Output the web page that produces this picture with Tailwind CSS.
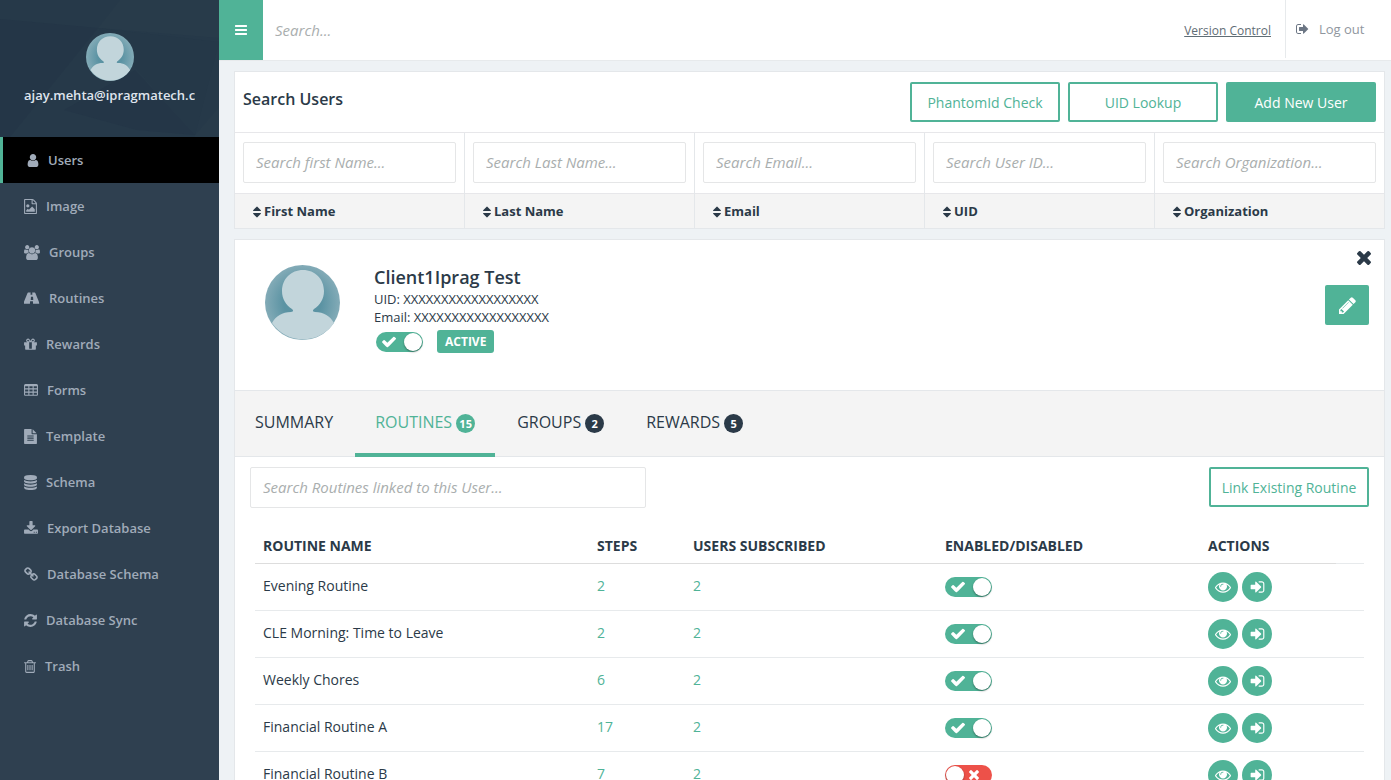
<!DOCTYPE html>
<html lang="en">
<head>
    <meta charset="utf-8">
    <meta name="viewport" content="width=device-width, initial-scale=1">
    <title>Users</title>
    <script src="https://cdn.jsdelivr.net/npm/@tailwindcss/browser@4"></script>
</head>
<body class="flex min-h-screen bg-[#eef2f5] font-['Open_Sans',sans-serif] text-[#2b3a48]">

    <!-- Icon sprite -->
    <svg class="absolute size-0" xmlns="http://www.w3.org/2000/svg">
        <symbol id="bars" viewBox="128 128 1536 1536"><path d="M1664 1344v128q0 26-19 45t-45 19h-1408q-26 0-45-19t-19-45v-128q0-26 19-45t45-19h1408q26 0 45 19t19 45zm0-512v128q0 26-19 45t-45 19h-1408q-26 0-45-19t-19-45v-128q0-26 19-45t45-19h1408q26 0 45 19t19 45zm0-512v128q0 26-19 45t-45 19h-1408q-26 0-45-19t-19-45v-128q0-26 19-45t45-19h1408q26 0 45 19t19 45z"/></symbol>
        <symbol id="user" viewBox="192 0 1408 1792"><path d="M1536 1399q0 109-62.5 187t-150.5 78h-854q-88 0-150.5-78t-62.5-187q0-85 8.500-160.500t31.500-152 58.500-131 94-89 134.500-34.500q131 128 313 128t313-128q76 0 134.500 34.500t94 89 58.500 131 31.500 152 8.500 160.500zm-256-887q0 159-112.500 271.500t-271.500 112.500-271.500-112.500-112.500-271.500 112.500-271.500 271.500-112.500 271.500 112.500 112.500 271.500z"/></symbol>
        <symbol id="image" viewBox="128 0 1536 1792"><path d="M1596 380q28 28 48 76t20 88v1152q0 40-28 68t-68 28h-1344q-40 0-68-28t-28-68v-1600q0-40 28-68t68-28h896q40 0 88 20t76 48zm-444-244v376h376q-10-29-22-41l-313-313q-12-12-41-22zm384 1528v-1024h-416q-40 0-68-28t-28-68v-416h-768v1536h1280zm-128-448v320h-1024v-192l192-192 128 128 384-384zm-832-192q-80 0-136-56t-56-136 56-136 136-56 136 56 56 136-56 136-136 56z"/></symbol>
        <symbol id="users" viewBox="0 0 1920 1792"><path d="M593 896q-162 5-265 128h-134q-82 0-138-40.500t-56-118.500q0-353 124-353 6 0 43.500 21t97.500 42.500 119 21.500q67 0 133-23-5 37-5 66 0 139 81 256zm1071 637q0 120-73 189.500t-194 69.500h-874q-121 0-194-69.500t-73-189.500q0-53 3.500-103.500t14-109 26.500-108.500 43-97.500 62-81 85.500-53.500 111.500-20q10 0 43 21.500t73 48 107 48 135 21.500 135-21.500 107-48 73-48 43-21.500q61 0 111.500 20t85.500 53.500 62 81 43 97.500 26.500 108.500 14 109 3.500 103.500zm-1024-1277q0 106-75 181t-181 75-181-75-75-181 75-181 181-75 181 75 75 181zm704 384q0 159-112.500 271.500t-271.500 112.500-271.500-112.500-112.500-271.500 112.500-271.500 271.500-112.500 271.500 112.500 112.500 271.500zm576 225q0 78-56 118.500t-138 40.500h-134q-103-123-265-128 81-117 81-256 0-29-5-66 66 23 133 23 59 0 119-21.500t97.500-42.500 43.500-21q124 0 124 353zm-128-609q0 106-75 181t-181 75-181-75-75-181 75-181 181-75 181 75 75 181z"/></symbol>
        <symbol id="road" viewBox="0 0 1920 1792"><path d="M1111 1045v-4l-24-320q-1-13-11-22.500t-23-9.500h-186q-13 0-23 9.500t-11 22.500l-24 320v4q-1 12 8 20t21 8h244q12 0 21-8t8-20zm718 388q0 103-65 103h-704q13 0 22-9.500t8-22.500l-20-256q-1-13-11-22.500t-23-9.500h-272q-13 0-23 9.500t-11 22.500l-20 256q-1 13 8 22.500t22 9.500h-704q-65 0-65-103 0-76 37-163l417-1044q8-19 26-33t38-14h339q-13 0-23 9.500t-11 22.500l-15 192q-1 14 8 23t22 9h166q13 0 22-9t8-23l-15-192q-1-13-11-22.500t-23-9.500h339q20 0 38 14t26 33l417 1044q37 87 37 163z"/></symbol>
        <symbol id="gift" viewBox="128 0 1536 1792"><path d="M1056 1356v-716h-320v716q0 25 18 38.500t46 13.500h192q28 0 46-13.500t18-38.500zm-456-844h195l-126-161q-26-31-69-31-40 0-68 28t-28 68 28 68 68 28zm688-96q0-40-28-68t-68-28q-43 0-69 31l-125 161h194q40 0 68-28t28-68zm376 256v320q0 14-9 23t-23 9h-96v416q0 40-28 68t-68 28h-1088q-40 0-68-28t-28-68v-416h-96q-14 0-23-9t-9-23v-320q0-14 9-23t23-9h440q-93 0-158.500-65.500t-65.500-158.500 65.500-158.500 158.500-65.500q107 0 168 77l128 165 128-165q61-77 168-77 93 0 158.500 65.500t65.500 158.500-65.500 158.500-158.500 65.500h440q14 0 23 9t9 23z"/></symbol>
        <symbol id="table" viewBox="64 0 1664 1792"><path fill-rule="evenodd" d="M224 128h1344q66 0 113 47t47 113v1088q0 66-47 113t-113 47h-1344q-66 0-113-47t-47-113v-1088q0-66 47-113t113-47zM192 384v256h384v-256zM704 384v256h384v-256zM1216 384v256h384v-256zM192 768v256h384v-256zM704 768v256h384v-256zM1216 768v256h384v-256zM192 1152v256h384v-256zM704 1152v256h384v-256zM1216 1152v256h384v-256z"/></symbol>
        <symbol id="file" viewBox="128 0 1536 1792"><path d="M1596 476q14 14 28 36h-472v-472q22 14 36 28zm-476 164h544v1056q0 40-28 68t-68 28h-1344q-40 0-68-28t-28-68v-1600q0-40 28-68t68-28h800v544q0 40 28 68t68 28zm160 736v-64q0-14-9-23t-23-9h-704q-14 0-23 9t-9 23v64q0 14 9 23t23 9h704q14 0 23-9t9-23zm0-256v-64q0-14-9-23t-23-9h-704q-14 0-23 9t-9 23v64q0 14 9 23t23 9h704q14 0 23-9t9-23zm0-256v-64q0-14-9-23t-23-9h-704q-14 0-23 9t-9 23v64q0 14 9 23t23 9h704q14 0 23-9t9-23z"/></symbol>
        <symbol id="database" viewBox="128 0 1536 1792"><path d="M896 768q237 0 443-43t325-127v170q0 69-103 128t-280 93.500-385 34.500-385-34.500-280-93.500-103-128v-170q119 84 325 127t443 43zm0 768q237 0 443-43t325-127v170q0 69-103 128t-280 93.500-385 34.500-385-34.500-280-93.500-103-128v-170q119 84 325 127t443 43zm0-384q237 0 443-43t325-127v170q0 69-103 128t-280 93.500-385 34.500-385-34.500-280-93.500-103-128v-170q119 84 325 127t443 43zm0-1152q208 0 385 34.500t280 93.500 103 128v128q0 69-103 128t-280 93.500-385 34.500-385-34.500-280-93.500-103-128v-128q0-69 103-128t280-93.500 385-34.500z"/></symbol>
        <symbol id="download" viewBox="64 0 1664 1792"><path d="M1344 1344q0-26-19-45t-45-19-45 19-19 45 19 45 45 19 45-19 19-45zm256 0q0-26-19-45t-45-19-45 19-19 45 19 45 45 19 45-19 19-45zm128-224v320q0 40-28 68t-68 28h-1472q-40 0-68-28t-28-68v-320q0-40 28-68t68-28h465l135 136q58 56 136 56t136-56l136-136h464q40 0 68 28t28 68zm-325-569q17 41-14 70l-448 448q-18 19-45 19t-45-19l-448-448q-31-29-14-70 17-39 59-39h256v-448q0-26 19-45t45-19h256q26 0 45 19t19 45v448h256q42 0 59 39z"/></symbol>
        <symbol id="chain" viewBox="64 0 1664 1792"><path d="M1520 1216q0-40-28-68l-208-208q-28-28-68-28-42 0-72 32 3 3 19 18.500t21.500 21.500 15 19 13 25.500 3.500 27.500q0 40-28 68t-68 28q-15 0-27.500-3.500t-25.500-13-19-15-21.500-21.500-18.500-19q-33 31-33 73 0 40 28 68l206 207q27 27 68 27 40 0 68-26l147-146q28-28 28-67zm-703-705q0-40-28-68l-206-207q-28-28-68-28-39 0-68 27l-147 146q-28 28-28 67 0 40 28 68l208 208q27 27 68 27 42 0 72-31-3-3-19-18.500t-21.500-21.500-15-19-13-25.500-3.500-27.500q0-40 28-68t68-28q15 0 27.500 3.500t25.500 13 19 15 21.500 21.500 18.500 19q33-31 33-73zm895 705q0 120-85 203l-147 146q-83 83-203 83-121 0-204-85l-206-207q-83-83-83-203 0-123 88-209l-88-88q-86 88-208 88-120 0-204-84l-208-208q-84-84-84-204t85-203l147-146q83-83 203-83 121 0 204 85l206 207q83 83 83 203 0 123-88 209l88 88q86-88 208-88 120 0 204 84l208 208q84 84 84 204z"/></symbol>
        <symbol id="refresh" viewBox="128 0 1536 1792"><path d="M1639 1056q0 5-1 7-64 268-268 434.500t-478 166.500q-146 0-282.500-55t-243.500-157l-129 129q-19 19-45 19t-45-19-19-45v-448q0-26 19-45t45-19h448q26 0 45 19t19 45-19 45l-137 137q71 66 161 102t187 36q134 0 250-65t186-179q11-17 53-117 8-23 30-23h192q13 0 22.500 9.500t9.500 22.500zm25-800v448q0 26-19 45t-45 19h-448q-26 0-45-19t-19-45 19-45l138-138q-148-137-349-137-134 0-250 65t-186 179q-11 17-53 117-8 23-30 23h-199q-13 0-22.500-9.500t-9.500-22.500v-7q65-268 270-434.500t480-166.500q146 0 284 55.500t245 156.500l130-129q19-19 45-19t45 19 19 45z"/></symbol>
        <symbol id="trash" viewBox="192 0 1408 1792"><path d="M704 736v576q0 14-9 23t-23 9h-64q-14 0-23-9t-9-23v-576q0-14 9-23t23-9h64q14 0 23 9t9 23zm256 0v576q0 14-9 23t-23 9h-64q-14 0-23-9t-9-23v-576q0-14 9-23t23-9h64q14 0 23 9t9 23zm256 0v576q0 14-9 23t-23 9h-64q-14 0-23-9t-9-23v-576q0-14 9-23t23-9h64q14 0 23 9t9 23zm128 724v-948h-896v948q0 22 7 40.500t14.500 27 10.500 8.500h832q3 0 10.500-8.500t14.500-27 7-40.500zm-672-1076h448l-48-117q-7-9-17-11h-317q-10 2-17 11zm928 32v64q0 14-9 23t-23 9h-96v948q0 83-47 143.500t-113 60.500h-832q-66 0-113-58.500t-47-141.500v-952h-96q-14 0-23-9t-9-23v-64q0-14 9-23t23-9h309l70-167q15-37 54-63t79-26h320q40 0 79 26t54 63l70 167h309q14 0 23 9t9 23z"/></symbol>
        <symbol id="signout" viewBox="64 0 1664 1792"><path d="M704 1440q0 4 1 20t.5 26.500-3 23.500-10 19.500-20.500 6.500h-320q-119 0-203.500-84.500t-84.500-203.500v-704q0-119 84.500-203.500t203.500-84.500h320q13 0 22.500 9.500t9.500 22.500q0 4 1 20t.5 26.500-3 23.500-10 19.500-20.500 6.500h-320q-66 0-113 47t-47 113v704q0 66 47 113t113 47h312l11.500 1 11.500 3 8 5.500 7 9 2 13.500zm928-544q0 26-19 45l-544 544q-19 19-45 19t-45-19-19-45v-288h-448q-26 0-45-19t-19-45v-384q0-26 19-45t45-19h448v-288q0-26 19-45t45-19 45 19l544 544q19 19 19 45z"/></symbol>
        <symbol id="signin" viewBox="128 0 1536 1792"><path d="M1312 896q0 26-19 45l-544 544q-19 19-45 19t-45-19-19-45v-288h-448q-26 0-45-19t-19-45v-384q0-26 19-45t45-19h448v-288q0-26 19-45t45-19 45 19l544 544q19 19 19 45zm352-352v704q0 119-84.500 203.500t-203.500 84.500h-320q-13 0-22.500-9.500t-9.500-22.500q0-4-1-20t-.5-26.500 3-23.500 10-19.500 20.500-6.500h320q66 0 113-47t47-113v-704q0-66-47-113t-113-47h-312l-11.500-1-11.500-3-8-5.500-7-9-2-13.500q0-4-1-20t-.5-26.500 3-23.500 10-19.500 20.500-6.500h320q119 0 203.500 84.500t84.500 203.500z"/></symbol>
        <symbol id="eye" viewBox="0 0 1792 1792"><path d="M1664 960q-152-236-381-353 61 104 61 225 0 185-131.500 316.500t-316.500 131.500-316.500-131.500-131.500-316.500q0-121 61-225-229 117-381 353 133 205 333.500 326.500t434.500 121.500 434.500-121.500 333.500-326.500zm-720-384q0-20-14-34t-34-14q-125 0-214.500 89.500t-89.500 214.500q0 20 14 34t34 14 34-14 14-34q0-86 61-147t147-61q20 0 34-14t14-34zm848 384q0 34-20 69-140 230-376.500 368.500t-499.500 138.500-499.500-139-376.500-368q-20-35-20-69t20-69q140-229 376.500-368t499.500-139 499.500 139 376.500 368q20 35 20 69z"/></symbol>
        <symbol id="sort" viewBox="384 128 1024 1536"><path d="M1408 1088q0 26-19 45l-448 448q-19 19-45 19t-45-19l-448-448q-19-19-19-45t19-45 45-19h896q26 0 45 19t19 45zm0-384q0 26-19 45t-45 19h-896q-26 0-45-19t-19-45 19-45l448-448q19-19 45-19t45 19l448 448q19 19 19 45z"/></symbol>
        <symbol id="pencil" viewBox="128 128 1536 1536"><path d="M491 1536l91-91-235-235-91 91v107h128v128h107zm523-928q0-22-22-22-10 0-17 7l-542 542q-7 7-7 17 0 22 22 22 10 0 17-7l542-542q7-7 7-17zm-54-192l416 416-832 832h-416v-416zm683 96q0 53-37 90l-166 166-416-416 166-165q36-38 90-38 53 0 91 38l235 234q37 39 37 91z"/></symbol>
        <symbol id="check" viewBox="121 334 1550 1188"><path d="M1671 566q0 40-28 68l-724 724-136 136q-28 28-68 28t-68-28l-136-136-362-362q-28-28-28-68t28-68l136-136q28-28 68-28t68 28l294 295 656-657q28-28 68-28t68 28l136 136q28 28 28 68z"/></symbol>
        <symbol id="times" viewBox="302 366 1188 1188"><path d="M1490 1322q0 40-28 68l-136 136q-28 28-68 28t-68-28l-294-294-294 294q-28 28-68 28t-68-28l-136-136q-28-28-28-68t28-68l294-294-294-294q-28-28-28-68t28-68l136-136q28-28 68-28t68 28l294 294 294-294q28-28 68-28t68 28l136 136q28 28 28 68t-28 68l-294 294 294 294q28 28 28 68z"/></symbol>
        <radialGradient id="face"><stop offset="0.500" stop-color="#5b93a3"/><stop offset="1" stop-color="#83abb7"/></radialGradient>
        <symbol id="avatar" viewBox="0 0 75 75">
            <circle cx="37.500" cy="37.500" r="37.500" fill="url(#face)"/>
            <path fill="#c2d5db" d="M38 5c12 0 21 9 21 21 0 8-4 14-10 18-2 2-1 3 1 3 9 0 15 4 19 11a37.500 37.500 0 0 1-62 0c4-7 10-11 19-11 2 0 3-1 1-3-6-4-10-10-10-18C17 14 26 5 38 5z"/>
        </symbol>
    </svg>

    <!-- Sidebar -->
    <aside class="w-[219px] shrink-0 bg-[#2f4050]">
        <div class="relative h-[137px] overflow-hidden bg-[#263949] px-6 pt-[33px]">
            <svg class="absolute inset-0 h-full w-full" viewBox="0 0 219 137" preserveAspectRatio="none">
                <path fill="#243647" d="M0 19l98 9-88 109H0zM135 70l60 65-58-5-73-20z"/>
                <path fill="#283b4a" d="M120 0h99v38l-121-10zM195 135l24-28v30h-24z"/>
                <path fill="#253848" d="M98 28l121 14-24 93-58-66z"/>
            </svg>
            <div class="relative flex flex-col items-center">
                <svg class="size-12"><use href="#avatar"/></svg>
                <p class="mt-1 w-[171px] overflow-hidden text-[13px] leading-5 font-semibold whitespace-nowrap text-[#dfe4ed]">ajay.mehta@ipragmatech.com</p>
            </div>
        </div>
        <nav id="menu"></nav>
    </aside>

    <div class="min-w-0 flex-1">
        <!-- Top bar -->
        <header class="flex h-[61px] border-b border-[#e7eaec] bg-white">
            <button class="flex h-[60px] w-11 items-center justify-center bg-[#50b397] text-white" aria-label="Toggle menu">
                <svg class="size-3 fill-current"><use href="#bars"/></svg>
            </button>
            <input type="text" aria-label="Search" placeholder="Search..." class="min-w-0 flex-1 px-3 text-[15px] outline-none placeholder:text-[#a9aeae] placeholder:italic">
            <a href="#" class="mr-[14px] self-center pt-[2px] text-xs leading-5 text-[#5f6d75] underline">Version Control</a>
            <a href="#" class="flex h-[58px] w-[106px] items-center gap-[10px] border-l border-[#e7eaec] pl-[10px] text-[13px] text-[#8f969e]">
                <svg class="h-[14px] w-[13px] fill-[#6c7684]"><use href="#signout"/></svg>
                <span class="pt-[2px]">Log out</span>
            </a>
        </header>

        <main class="space-y-[10px] py-[10px] pr-[6px] pl-[15px]">
            <!-- Search users -->
            <section class="border border-[#e4e7ea] bg-white">
                <div class="flex h-[61px] items-center gap-2 border-b border-[#e7e7ea] px-2">
                    <h1 class="mb-[6px] flex-1 font-semibold">Search Users</h1>
                    <button class="h-10 w-[150px] rounded-xs border-2 border-[#50b397] pt-px text-sm text-[#50b397]">PhantomId Check</button>
                    <button class="h-10 w-[150px] rounded-xs border-2 border-[#50b397] pt-px text-sm text-[#50b397]">UID Lookup</button>
                    <button class="h-10 w-[150px] rounded-xs bg-[#50b397] pt-px text-sm font-medium text-white">Add New User</button>
                </div>
                <!-- last column's border lies on the panel's own -->
                <div id="filters" class="-mr-px grid grid-cols-5"></div>
            </section>

            <!-- Selected user -->
            <section class="border border-[#e4e7ea] bg-white">
                <div class="flex h-[150px] pt-[11px] pr-[13px] pl-[30px]">
                    <svg class="mt-[14px] size-[75px]"><use href="#avatar"/></svg>
                    <div class="mt-[14px] ml-[34px] flex-1">
                        <h2 class="mb-px text-lg leading-6 font-semibold">Client1Iprag Test</h2>
                        <p class="text-[13px] leading-[18px]">UID: XXXXXXXXXXXXXXXXXX</p>
                        <p class="text-[13px] leading-[18px]">Email: XXXXXXXXXXXXXXXXXX</p>
                        <div class="mt-1 flex items-center gap-[14px] pl-[2px]">
                            <label class="flex h-5 w-[47px] cursor-pointer items-center justify-between rounded-full bg-[#ed5149] px-px has-checked:flex-row-reverse has-checked:bg-[#50b397]">
                                <input type="checkbox" class="peer sr-only" aria-label="Active" checked>
                                <span class="size-[18px] rounded-full bg-white shadow-xs shadow-black/40"></span>
                                <svg class="ml-[5px] hidden h-3 w-[14px] fill-white peer-checked:block"><use href="#check"/></svg>
                            </label>
                            <span class="rounded-[3px] bg-[#50b397] px-2 text-xs leading-[23px] font-bold text-white">ACTIVE</span>
                        </div>
                    </div>
                    <div class="flex flex-col items-end gap-5">
                        <button aria-label="Close"><svg class="size-[14px] fill-current"><use href="#times"/></svg></button>
                        <button aria-label="Edit user" class="mr-[2px] flex h-10 w-11 items-center justify-center rounded-xs bg-[#50b397]"><svg class="size-[17px] fill-white"><use href="#pencil"/></svg></button>
                    </div>
                </div>

                <!-- Tabs -->
                <nav class="flex h-[67px] border-y border-[#e4e7ea] bg-[#f4f4f4]">
                    <a href="#" class="flex h-[66px] items-center border-b-4 border-transparent pr-[22px] pl-5">SUMMARY</a>
                    <a href="#" class="flex h-[66px] items-center gap-1 border-b-4 border-[#50b397] px-5 text-[#50b397]">ROUTINES <span class="mt-[2px] size-[19px] rounded-full bg-[#50b397] text-center text-[11px] leading-[19px] font-bold text-white">15</span></a>
                    <a href="#" class="flex h-[66px] items-center gap-1 border-b-4 border-transparent px-[22px]">GROUPS <span class="mt-[2px] size-[19px] rounded-full bg-[#2b3a48] text-center text-[11px] leading-[19px] font-bold text-white">2</span></a>
                    <a href="#" class="flex h-[66px] items-center gap-1 border-b-4 border-transparent px-5">REWARDS <span class="mt-[2px] size-[19px] rounded-full bg-[#2b3a48] text-center text-[11px] leading-[19px] font-bold text-white">5</span></a>
                </nav>

                <div class="px-[15px] py-[10px]">
                    <div class="flex items-start justify-between">
                        <input type="text" aria-label="Search routines" placeholder="Search Routines linked to this User..." class="h-[41px] w-[396px] rounded-xs border border-[#e5e6e7] px-3 pb-px text-[15px] outline-none placeholder:text-[#a9aeae] placeholder:italic">
                        <button class="h-10 w-40 rounded-xs border-2 border-[#50b397] pt-px text-sm text-[#50b397]">Link Existing Routine</button>
                    </div>
                    <div class="px-[5px] pt-5">
                        <table class="w-full table-fixed text-left text-sm">
                            <thead>
                                <tr class="h-[35px] border-b border-[#dddddd]">
                                    <th class="px-2 pt-[2px] font-bold">ROUTINE NAME</th>
                                    <th class="w-24 px-2 pt-[2px] font-bold">STEPS</th>
                                    <th class="w-[252px] px-2 pt-[2px] font-bold">USERS SUBSCRIBED</th>
                                    <th class="w-[263px] px-2 pt-[2px] font-bold">ENABLED/DISABLED</th>
                                    <th class="w-[136px] px-2 pt-[2px] font-bold">ACTIONS</th>
                                    <td class="w-7 border-b border-[#e7eaec]"></td>
                                </tr>
                            </thead>
                            <tbody id="routines"></tbody>
                        </table>
                    </div>
                </div>
            </section>
        </main>
    </div>

    <script>
        // icon widths differ, the label follows the icon
        const menu = [
            ['Users', 'user', 'w-[12px]'],
            ['Image', 'image', 'w-[13px]'],
            ['Groups', 'users', 'w-[16px]'],
            ['Routines', 'road', 'w-[16px]'],
            ['Rewards', 'gift', 'w-[13px]'],
            ['Forms', 'table', 'w-[14px]'],
            ['Template', 'file', 'w-[13px]'],
            ['Schema', 'database', 'w-[13px]'],
            ['Export Database', 'download', 'w-[14px]'],
            ['Database Schema', 'chain', 'w-[14px]'],
            ['Database Sync', 'refresh', 'w-[13px]'],
            ['Trash', 'trash', 'w-[12px]'],
        ];

        document.getElementById('menu').innerHTML = menu.map(([label, icon, width], index) => `
            <a href="#" class="flex h-[46px] items-center gap-[9px] pl-6 text-[13px] font-semibold text-[#a0abb9] ${index === 0 ? 'border-l-3 border-[#50b397] bg-black' : ''}">
                <svg class="h-[15px] ${width} fill-current"><use href="#${icon}"/></svg>
                <span class="pt-[2px]">${label}</span>
            </a>
        `).join('');

        const filters = [
            ['Search first Name...', 'First Name'],
            ['Search Last Name...', 'Last Name'],
            ['Search Email...', 'Email'],
            ['Search User ID...', 'UID'],
            ['Search Organization...', 'Organization'],
        ];

        document.getElementById('filters').innerHTML = filters.map(([placeholder, label]) => `
            <div class="border-r border-[#e4e7ea]">
                <div class="h-[61px] border-b border-[#e7e7ea] px-2 pt-[9px]">
                    <input type="text" aria-label="${label}" placeholder="${placeholder}" class="h-[41px] w-full rounded-xs border border-[#e5e6e7] px-3 pb-px text-[15px] outline-none placeholder:text-[#a9aeae] placeholder:italic">
                </div>
                <button class="flex h-[34px] w-full items-center gap-[3px] bg-[#f4f4f4] pt-[2px] pl-[18px] text-[13px] font-bold">
                    <svg class="h-3 w-2 fill-current"><use href="#sort"/></svg>
                    ${label}
                </button>
            </div>
        `).join('');

        const routines = [
            { name: 'Evening Routine', steps: 2, users: 2, enabled: true },
            { name: 'CLE Morning: Time to Leave', steps: 2, users: 2, enabled: true },
            { name: 'Weekly Chores', steps: 6, users: 2, enabled: true },
            { name: 'Financial Routine A', steps: 17, users: 2, enabled: true },
            { name: 'Financial Routine B', steps: 7, users: 2, enabled: false },
        ];

        document.getElementById('routines').innerHTML = routines.map(routine => `
            <tr class="h-[47px] border-b border-[#e7eaec]">
                <td class="px-2 pb-[2px]">${routine.name}</td>
                <td class="px-2 pb-[2px] text-[#50b397]">${routine.steps}</td>
                <td class="px-2 pb-[2px] text-[#50b397]">${routine.users}</td>
                <td class="px-2">
                    <label class="flex h-5 w-[47px] cursor-pointer items-center justify-between rounded-full bg-[#ed5149] px-px has-checked:flex-row-reverse has-checked:bg-[#50b397]">
                        <input type="checkbox" class="peer sr-only" aria-label="${routine.name} enabled" ${routine.enabled ? 'checked' : ''}>
                        <span class="size-[18px] rounded-full bg-white shadow-xs shadow-black/40"></span>
                        <svg class="ml-[5px] hidden h-3 w-[14px] fill-white peer-checked:block"><use href="#check"/></svg>
                        <svg class="mr-3 size-[10px] fill-white peer-checked:hidden"><use href="#times"/></svg>
                    </label>
                </td>
                <td class="px-2">
                    <div class="flex gap-1">
                        <button aria-label="View ${routine.name}" class="flex size-[30px] items-center justify-center rounded-full bg-[#50b397]"><svg class="size-4 fill-white"><use href="#eye"/></svg></button>
                        <button aria-label="Open ${routine.name}" class="flex size-[30px] items-center justify-center rounded-full bg-[#50b397]"><svg class="h-4 w-[15px] fill-white"><use href="#signin"/></svg></button>
                    </div>
                </td>
                <td></td>
            </tr>
        `).join('');
    </script>
</body>
</html>
